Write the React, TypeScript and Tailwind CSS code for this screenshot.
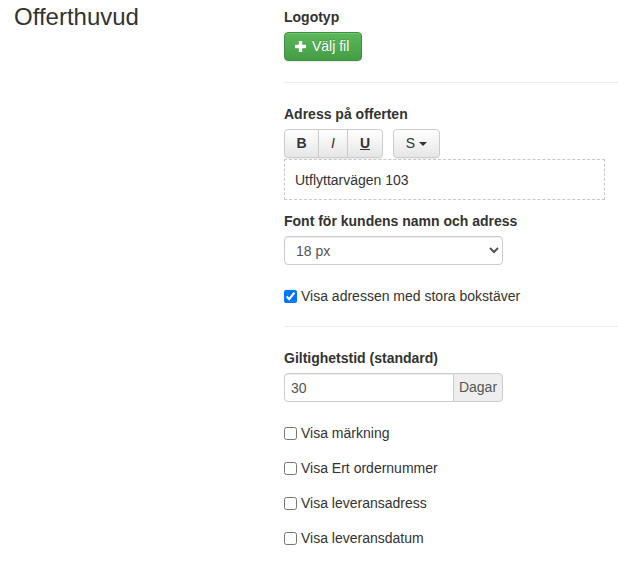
import type { ReactNode } from "react";

const font = "font-['Liberation_Sans',Arial,Helvetica,sans-serif]";

function Label({ children, className = "" }: { children: ReactNode; className?: string }) {
  return <div className={`text-[14px] leading-5 font-bold text-[#333] ${className}`}>{children}</div>;
}

function Divider({ className = "" }: { className?: string }) {
  return <div className={`h-px bg-[#eee] ${className}`} />;
}

function Check({ label, checked = false, className = "" }: { label: string; checked?: boolean; className?: string }) {
  return (
    <label className={`flex items-start text-[14px] leading-5 text-[#333] ${className}`}>
      <input type="checkbox" defaultChecked={checked} className="m-0 mt-[4px] mr-[4px] h-[13px] w-[13px] shrink-0" />
      <span>{label}</span>
    </label>
  );
}

const toolBtn =
  "h-[29px] flex items-center justify-center text-[14px] text-[#333] bg-linear-to-b from-white to-[#e6e6e6] border border-[#ccc] shadow-[inset_0_1px_0_rgba(255,255,255,0.15),0_1px_1px_rgba(0,0,0,0.075)]";

export default function App() {
  return (
    <div className={`flex w-[618px] h-[563px] overflow-hidden bg-white ${font}`}>
      <div className="w-[284px] shrink-0 pl-[14px] pt-[4px]">
        <h3 className="text-[24px] leading-[26.4px] text-[#333] font-normal">Offerthuvud</h3>
      </div>

      <div className="flex-1 pt-[7px]">
        <Label>Logotyp</Label>
        <button className="mt-[5px] h-[29px] w-[78px] flex items-center pl-[10px] rounded-[4px] border border-[#3e8f3e] bg-linear-to-b from-[#5cb85c] to-[#449d44] text-white text-[14px] [text-shadow:0_-1px_0_rgba(0,0,0,0.2)] shadow-[inset_0_1px_0_rgba(255,255,255,0.15),0_1px_1px_rgba(0,0,0,0.075)]">
          <svg width="11" height="11" viewBox="0 0 11 11" className="mr-[6px]">
            <rect x="3.8" y="0" width="3.4" height="11" fill="#fff" />
            <rect x="0" y="3.8" width="11" height="3.4" fill="#fff" />
          </svg>
          Välj fil
        </button>

        <Divider className="mt-[21px]" />

        <Label className="mt-[21px]">Adress på offerten</Label>
        <div className="mt-[5px] flex">
          <div className="flex">
            <div className={`${toolBtn} w-[35px] rounded-l-[4px] font-bold`}>B</div>
            <div className={`${toolBtn} w-[30px] -ml-px italic`}>I</div>
            <div className={`${toolBtn} w-[36px] -ml-px rounded-r-[4px] font-bold underline`}>U</div>
          </div>
          <div className={`${toolBtn} w-[47px] ml-[10px] rounded-[4px]`}>
            S
            <svg width="8" height="4" viewBox="0 0 8 4" className="ml-[4px]">
              <path d="M0 0H8L4 4Z" fill="#333" />
            </svg>
          </div>
        </div>
        <div className="mt-px h-[41px] w-[321px] border border-dashed border-[#c8c8c8] flex items-center px-[10px] text-[14px] leading-5 text-[#333]">
          Utflyttarvägen 103
        </div>

        <Label className="mt-[11px]">Font för kundens namn och adress</Label>
        <select
          defaultValue="18"
          className="mt-[5px] block h-[29px] w-[219px] rounded-[4px] border border-[#ccc] bg-white pl-[7px] pr-[6px] text-[14px] text-[#555] shadow-[inset_0_1px_1px_rgba(0,0,0,0.075)]"
        >
          <option value="14">14 px</option>
          <option value="16">16 px</option>
          <option value="18">18 px</option>
          <option value="20">20 px</option>
        </select>

        <Check className="mt-[21px]" checked label="Visa adressen med stora bokstäver" />

        <Divider className="mt-[20px]" />

        <Label className="mt-[21px]">Giltighetstid (standard)</Label>
        <div className="mt-[5px] flex h-[29px] w-[219px]">
          <input
            defaultValue="30"
            className="h-full min-w-0 flex-1 rounded-l-[4px] border border-[#ccc] px-[6px] text-[14px] text-[#555] shadow-[inset_0_1px_1px_rgba(0,0,0,0.075)] outline-none"
          />
          <div className="h-full w-[50px] -ml-px flex items-center justify-center rounded-r-[4px] border border-[#ccc] bg-[#eee] text-[14px] text-[#555]">
            Dagar
          </div>
        </div>

        <Check className="mt-[21px]" label="Visa märkning" />
        <Check className="mt-[15px]" label="Visa Ert ordernummer" />
        <Check className="mt-[15px]" label="Visa leveransadress" />
        <Check className="mt-[15px]" label="Visa leveransdatum" />
      </div>
    </div>
  );
}
